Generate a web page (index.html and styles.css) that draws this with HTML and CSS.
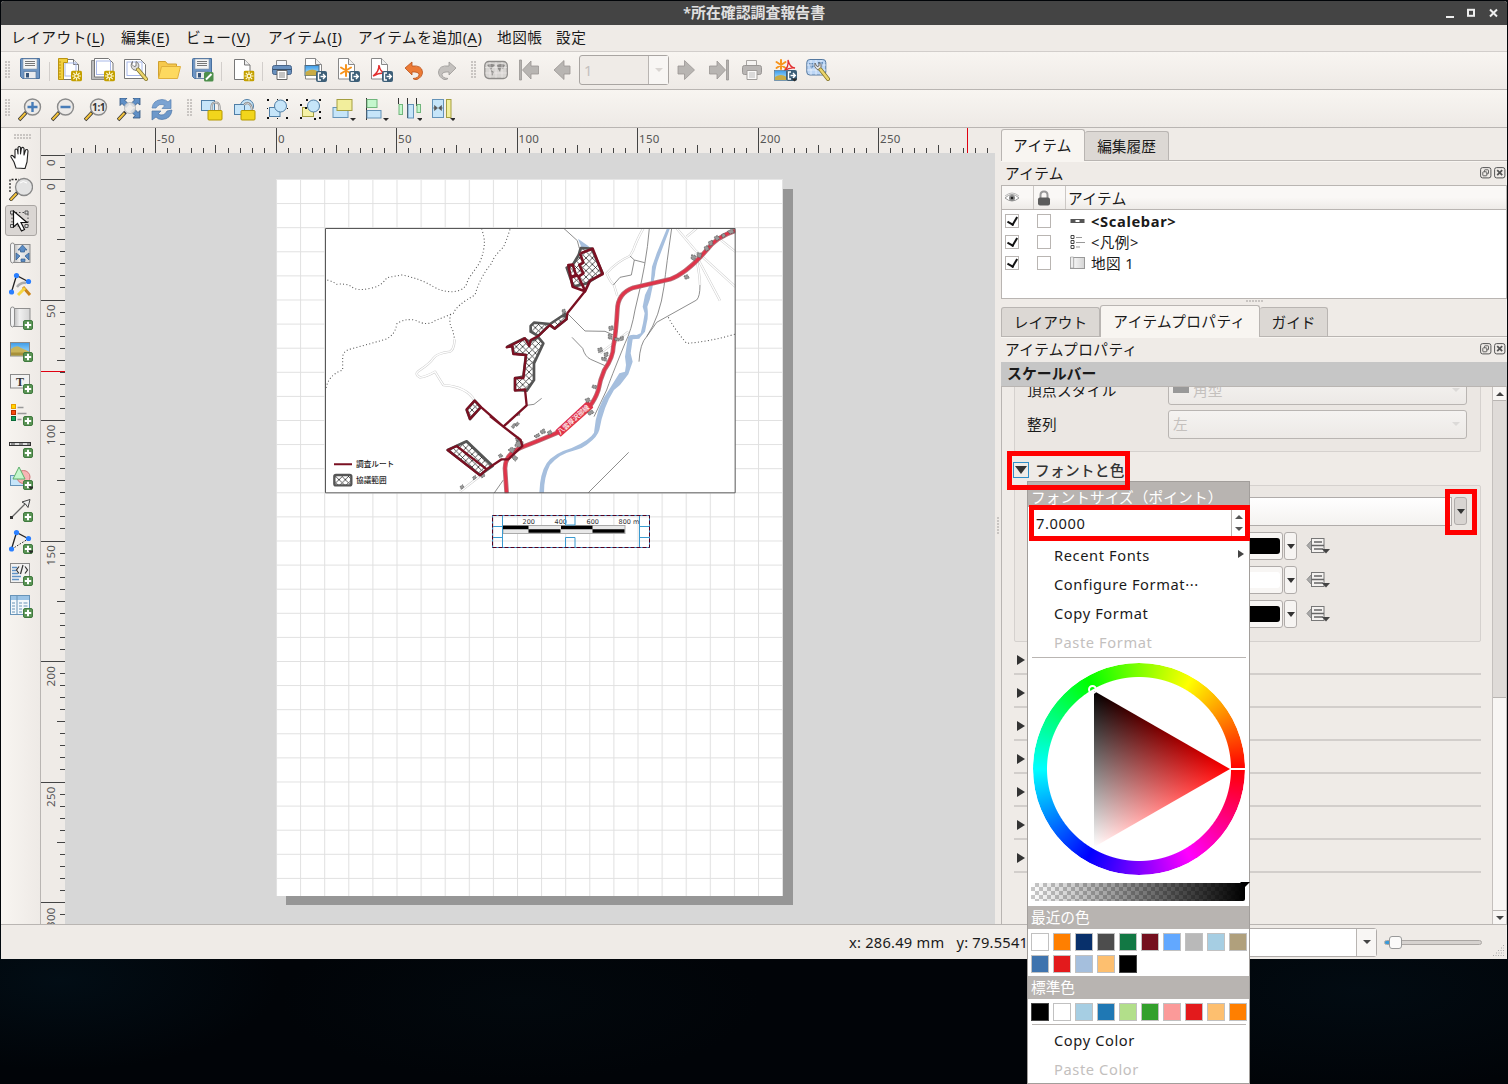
FILE: index.html
```html
<!DOCTYPE html>
<html lang="ja">
<head>
<meta charset="utf-8">
<title>所在確認調査報告書</title>
<link rel="stylesheet" href="styles.css">
</head>
<body>
<svg class="defs" width="0" height="0" aria-hidden="true">
  <defs>
    <linearGradient id="g-sky" x1="0" y1="0" x2="0" y2="1"><stop offset="0" stop-color="#3d9be8"/><stop offset=".5" stop-color="#7cc4f5"/></linearGradient>
    <linearGradient id="g-roll"><stop offset="0" stop-color="#bbb"/><stop offset=".35" stop-color="#f0f0f0"/><stop offset="1" stop-color="#d4d4d4"/></linearGradient>

    <symbol id="b-star" viewBox="0 0 11 11"><rect width="11" height="11" rx="2" fill="#c4a000"/><path d="M5.5 1v9M1 5.5h9M2.3 2.3l6.4 6.4M8.7 2.3L2.3 8.7" stroke="#fff8d0" stroke-width="1.2"/><circle cx="5.5" cy="5.5" r="1.8" fill="#c4a000" stroke="#fff8d0"/></symbol>
    <symbol id="b-plus" viewBox="0 0 10 10"><rect x=".5" y=".5" width="9" height="9" rx="1.5" fill="#5a9455" stroke="#3f7a3e"/><path d="M5 1.8v6.4M1.8 5h6.4" stroke="#fff" stroke-width="2"/></symbol>
    <symbol id="b-export" viewBox="0 0 11 11"><rect width="11" height="11" rx="2" fill="#3d5f78"/><path d="M5 2H2.5v7H5M4.5 5.5H9M7 3l2.3 2.5L7 8" fill="none" stroke="#fff" stroke-width="1.4"/></symbol>
    <symbol id="b-drop" viewBox="0 0 6 4"><path d="M0 .5h6L3 3.5z" fill="#2b2b2b"/></symbol>

    <symbol id="i-save" viewBox="0 0 24 24"><path d="M2.5 1.5q0-1 1-1h18v20h-17l-2-2z" fill="#6d95c4" stroke="#48709f"/><rect x="5" y="1" width="14" height="10" fill="#f4f4f4" stroke="#8a9aac" stroke-width=".6"/><path d="M7 3.5h10M7 5.5h10M7 7.5h10" stroke="#777"/><rect x="6" y="13.5" width="12" height="7" fill="#e9ebee" stroke="#597a9f" stroke-width=".7"/><rect x="8" y="15" width="3" height="4.500" fill="#35557c"/></symbol>
    <symbol id="i-page" viewBox="0 0 24 24"><path d="M4.500 1.500h11l5 5v15h-16z" fill="#fff" stroke="#777"/><path d="M15.500 1.500v5h5" fill="#eee" stroke="#777"/></symbol>
    <symbol id="i-newlayout" viewBox="0 0 24 24"><use href="#i-page"/><rect x="7" y="5" width="11" height="13" fill="none" stroke="#a9b9ea"/><path d="M.5.500h9v4h-4v17h-5z" fill="#f1cf3f" stroke="#bb9410"/><path d="M1 4h2M1 7h2M1 10h2M1 13h2M1 16h2M1 19h2" stroke="#bb9410"/><use href="#b-star" x="13" y="12.500" width="11" height="11"/></symbol>
    <symbol id="i-duplayout" viewBox="0 0 24 24"><path d="M.5 2.500h4v16h12v3h-16z" fill="#bbb" stroke="#888"/><path d="M3.500.500h14l4.500 4.500v14h-18.500z" fill="#fff" stroke="#777"/><rect x="5.500" y="3" width="14" height="13.500" fill="none" stroke="#a9b9ea"/><use href="#b-star" x="13" y="12.500" width="11" height="11"/></symbol>
    <symbol id="i-settings" viewBox="0 0 24 24"><path d="M.5 1.500h16l5 5v14h-21z" fill="#fff" stroke="#777"/><rect x="3" y="4" width="15" height="13.500" fill="none" stroke="#a9b9ea"/><path d="M8.500 3.500Q5.500 8 9 11.500l3 1 2.500-2.500q1.500-4.500-2.500-6.500v4.500l-2 .5-2-2z" fill="#ddd" stroke="#666" stroke-width=".8"/><path d="M14 11.500l8 9.500" stroke="#80742c" stroke-width="4" stroke-linecap="round"/><path d="M14 11.500l8 9.500" stroke="#ecd56c" stroke-width="2.500" stroke-linecap="round"/></symbol>
    <symbol id="i-folder" viewBox="0 0 24 24"><path d="M1.500 20V3.500h7l2 2.500h9v3" fill="#f6c94c" stroke="#cfa030"/><path d="M1.500 20.500L4.500 8.500h19l-3 12z" fill="#fdd95f" stroke="#e0b03c"/></symbol>
    <symbol id="i-saveas" viewBox="0 0 24 24"><use href="#i-save"/><rect x="14" y="14" width="9.500" height="9.500" rx="1.500" fill="#4d8f4c"/><path d="M16 21.500l5.500-5.500" stroke="#fff" stroke-width="2"/></symbol>
    <symbol id="i-newpage" viewBox="0 0 24 24"><path d="M3.500 1.500h10l5.500 5.500v14.500h-15.500z" fill="#fff" stroke="#777"/><path d="M13.500 1.500v5.500h5.500" fill="#eee" stroke="#777"/><use href="#b-star" x="12.500" y="12.500" width="11" height="11"/></symbol>
    <symbol id="i-print" viewBox="0 0 24 24"><path d="M6.500 8V2.500h10V8" fill="#f4f6fa" stroke="#888"/><rect x="2.500" y="7.500" width="19" height="9" rx="2" fill="#6991bf" stroke="#48658a"/><path d="M3 11.500h18" stroke="#35506f"/><path d="M7 12.500h10v9H7z" fill="#fff" stroke="#666"/><path d="M9 15h6M9 17h6M9 19h6" stroke="#888"/></symbol>
    <symbol id="i-printgrey" viewBox="0 0 24 24"><path d="M6.500 8V2.500h10V8" fill="#f6f4f2" stroke="#a8a5a2"/><rect x="2.500" y="7.500" width="19" height="9" rx="2" fill="#b9b6b4" stroke="#9a9795"/><path d="M7 12.500h10v9H7z" fill="#faf9f8" stroke="#a09d9a"/><path d="M9 15h6M9 17h6M9 19h6" stroke="#bbb"/></symbol>
    <symbol id="i-eximg" viewBox="0 0 24 24"><path d="M2.500.500h10l6 6v14.500h-16z" fill="#fff" stroke="#888"/><path d="M12.500.500v6h6" fill="#eee" stroke="#888"/><rect x="2" y="7.500" width="14" height="10" fill="url(#g-sky)" stroke="#4b6c86"/><path d="M2.500 14q7-5 13 0v3.500h-13z" fill="#c9ac45"/><use href="#b-export" x="13" y="13" width="11" height="11"/></symbol>
    <symbol id="i-exsvg" viewBox="0 0 24 24"><path d="M2.500.500h10l6 6v14.500h-16z" fill="#fff" stroke="#888"/><path d="M12.500.500v6h6" fill="#eee" stroke="#888"/><path d="M10 7v11M5 9.500l10 6M15 9.500l-10 6" stroke="#f7941d" stroke-width="2" stroke-linecap="round"/><use href="#b-export" x="13" y="13" width="11" height="11"/></symbol>
    <symbol id="i-expdf" viewBox="0 0 24 24"><path d="M2.500.500h10l6 6v14.500h-16z" fill="#fff" stroke="#888"/><path d="M12.500.500v6h6" fill="#eee" stroke="#888"/><path d="M4 18q6-4 6-11 1 7 6 8-6-.5-12 3" fill="none" stroke="#e33030" stroke-width="1.500"/><use href="#b-export" x="13" y="13" width="11" height="11"/></symbol>
    <symbol id="i-undo" viewBox="0 0 24 24"><path d="M3 10l7-6v4q10-1 10.500 6 0 5-5.500 7.500-3 .5-4-1 6-.5 6-4-.5-3-7-2.500V17z" fill="#ec7a35" stroke="#b9521a" stroke-width=".8"/></symbol>
    <symbol id="i-redo" viewBox="0 0 24 24"><path d="M21 10l-7-6v4q-10-1-10.500 6 0 5 5.500 7.500 3 .5 4-1-6-.5-6-4 .5-3 7-2.500V17z" fill="#c4c1be" stroke="#9b9895" stroke-width=".8"/></symbol>
    <symbol id="i-atlas" viewBox="0 0 24 24"><rect x=".8" y="3.500" width="22.500" height="17" rx="4" fill="#d7d5d2" stroke="#8d8b89" stroke-width="1.300"/><path d="M3 7q5-2 8 0l-3 3-1 2-3-4zM13 7q4-2 8 0l-2 4-2-1-1 4-2-3zM7 12l3 2-2 4z" fill="#8d8b89"/><path d="M6 4v16M12 4v16M18 4v16M1 9.500h22M1 15h22" stroke="#f4f2f0" stroke-width=".5"/></symbol>
    <symbol id="i-first" viewBox="0 0 24 24"><path d="M2.500 2v20h2v-20z" fill="#b4b1ae" stroke="#999693" stroke-width=".8"/><path d="M5.500 12l8.500-9v5h7.500v8H14v5z" fill="#b8b5b2" stroke="#999693" stroke-width=".8"/></symbol>
    <symbol id="i-prev" viewBox="0 0 24 24"><path d="M4 12l10-9.500V8h6v8h-6v5.500z" fill="#b8b5b2" stroke="#999693" stroke-width=".8"/></symbol>
    <symbol id="i-next" viewBox="0 0 24 24"><path d="M20.500 12l-10-9.500V8h-6.500v8h6.500v5.500z" fill="#b8b5b2" stroke="#999693" stroke-width=".8"/></symbol>
    <symbol id="i-last" viewBox="0 0 24 24"><path d="M19.500 2v20h2v-20z" fill="#b4b1ae" stroke="#999693" stroke-width=".8"/><path d="M18.500 12l-8.500-9v5H2.500v8H10v5z" fill="#b8b5b2" stroke="#999693" stroke-width=".8"/></symbol>
    <symbol id="i-exatlas" viewBox="0 0 24 24"><path d="M8 2v9M3.500 4l9 6M12.500 4l-9 6" stroke="#f7941d" stroke-width="2" stroke-linecap="round"/><path d="M11 13q5-4 4-11 2 8 7 8-5-1-11 3" fill="none" stroke="#e33030" stroke-width="1.300"/><rect x="1.500" y="12.500" width="12" height="10" fill="url(#g-sky)" stroke="#4b6c86" stroke-width=".6"/><path d="M2 19q6-4 11.500 0v3H2z" fill="#c9ac45"/><use href="#b-export" x="13" y="12" width="11" height="11"/><use href="#b-drop" x="18" y="20" width="7" height="4"/></symbol>
    <symbol id="i-atlasset" viewBox="0 0 24 24"><rect x=".8" y="1.500" width="19" height="15.500" rx="3" fill="#bcd6f5" stroke="#54789f"/><path d="M3 5h4l1 3-3 3zM12 4h5l-1 5-3-2z" fill="#5c86b5"/><path d="M5 2v15M10 2v15M15 2v15M1 7h19M1 12h19" stroke="#f0f7ff" stroke-width=".7"/><path d="M9 5Q7.500 9 11 11.500l2 .5 2-2q1-4-2-5.500v3.500l-2 .5z" fill="#e5e5e5" stroke="#555" stroke-width=".8"/><path d="M14.500 11.500L22 21" stroke="#80742c" stroke-width="4" stroke-linecap="round"/><path d="M14.500 11.500L22 21" stroke="#ecd56c" stroke-width="2.500" stroke-linecap="round"/></symbol>

    <symbol id="i-lens" viewBox="0 0 24 24"><path d="M1 22l7.500-8" stroke="#333" stroke-width="3.600"/><path d="M1.500 21.500l6-6.500" stroke="#f3c33d" stroke-width="2"/><circle cx="14.500" cy="9" r="8" fill="#eceae8" stroke="#8b8b8b" stroke-width="1.400"/></symbol>
    <symbol id="i-zoomin" viewBox="0 0 24 24"><use href="#i-lens"/><path d="M14.500 4v10M9.500 9h10" stroke="#477cb8" stroke-width="2.400"/></symbol>
    <symbol id="i-zoomout" viewBox="0 0 24 24"><use href="#i-lens"/><path d="M9.500 9h10" stroke="#477cb8" stroke-width="2.400"/></symbol>
    <symbol id="i-zoom11" viewBox="0 0 24 24"><use href="#i-lens"/><text x="14.600" y="12.600" font-size="10" font-weight="700" letter-spacing="-.4" text-anchor="middle" fill="#333">1:1</text></symbol>
    <symbol id="i-zoomfull" viewBox="0 0 24 24"><path d="M3 0h7L8 2.500l4 4-3 3-4-4-2 2zM23 0v7l-2.500-2-4 4-3-3 4-4L16 0zM23 20h-7l2-2.500-4-4 3-3 4 4 2-2z" fill="#5f8fc6" stroke="#30547d" stroke-width=".8"/><path d="M1 22l7.500-8" stroke="#333" stroke-width="3.600"/><path d="M1.500 21.500l6-6.500" stroke="#f3c33d" stroke-width="2"/><circle cx="13" cy="10" r="5.500" fill="#eceae8" fill-opacity=".85" stroke="#bbb"/></symbol>
    <symbol id="i-refresh" viewBox="0 0 24 24"><path d="M2 10q1-8 10-8.500 4 0 6 2.500l3-2.500v9h-9l3-3q-6-3-9 2.500z" fill="#7ba3d2" stroke="#5580b3" stroke-width=".7"/><path d="M22 12q-1 9-10 9.500-4 0-6-2.500l-4 3v-9h9l-3 3q6 3 9-3z" fill="#6d98ca" stroke="#4c76a8" stroke-width=".7"/></symbol>
    <symbol id="i-lock" viewBox="0 0 24 24"><rect x="1.500" y="2.500" width="13" height="10" fill="#c6e5f9" stroke="#4f7ea6"/><path d="M11.500 13V9q0-4.500 4-4.500t4 4.500v4" fill="none" stroke="#8a8a8a" stroke-width="2.200"/><path d="M11.500 13V9q0-4.500 4-4.500t4 4.500v4" fill="none" stroke="#e5e5e5" stroke-width=".8"/><rect x="8" y="12.500" width="14" height="9.500" rx="1" fill="#f2d51c" stroke="#b59800"/></symbol>
    <symbol id="i-unlock" viewBox="0 0 24 24"><circle cx="14" cy="8" r="6.500" fill="#c6e5f9" stroke="#4f7ea6"/><rect x="1.500" y="6.500" width="10" height="10" fill="#c6e5f9" stroke="#4f7ea6"/><path d="M11 7q2-3 5-1.500 3 2 3 7" fill="none" stroke="#8a8a8a" stroke-width="2.200"/><path d="M11 7q2-3 5-1.500 3 2 3 7" fill="none" stroke="#e5e5e5" stroke-width=".8"/><rect x="8" y="12.500" width="14" height="9.500" rx="1" fill="#f2d51c" stroke="#b59800"/></symbol>
    <symbol id="i-group" viewBox="0 0 24 24"><rect x="3.500" y="9.500" width="10.500" height="9" fill="#c6e5f9" stroke="#4f7ea6"/><circle cx="14.500" cy="8" r="6" fill="#c6e5f9" stroke="#4f7ea6"/><path d="M1 1h2v2H1zM11 1h1v1h-1zM20 1h2v2h-2zM1 10h1v1H1zM21 10h1v1h-1zM1 19h2v2H1zM11 20h1v1h-1zM20 19h2v2h-2z" fill="#111"/></symbol>
    <symbol id="i-ungroup" viewBox="0 0 24 24"><rect x="3.500" y="9.500" width="11" height="9" fill="#f5f1a6" stroke="#a59f40"/><circle cx="14.500" cy="8" r="6" fill="#c6e5f9" stroke="#4f7ea6"/><path d="M1 6h2v2H1zM7 1h2v2H7zM20 1h2v2h-2zM6 9h2v2H6zM1 19h2v2H1zM15 20h2v2h-2zM20 13h2v2h-2zM20 19h2v2h-2z" fill="#111"/></symbol>
    <symbol id="i-raise" viewBox="0 0 24 24"><rect x="1" y="9.500" width="15" height="10" fill="#c6e5f9" stroke="#6593b8"/><rect x="5" y="1.500" width="15" height="11" fill="#f2ee9c" stroke="#a59f40"/><use href="#b-drop" x="18" y="19.500" width="6" height="4"/></symbol>
    <symbol id="i-align" viewBox="0 0 24 24"><path d="M1.500 0v22" stroke="#333"/><rect x="2" y="1.500" width="10" height="8" fill="#c4f7cd" stroke="#71b67c"/><rect x="2" y="12.500" width="14" height="7.500" fill="#c6e5f9" stroke="#6593b8"/><use href="#b-drop" x="18" y="19.500" width="6" height="4"/></symbol>
    <symbol id="i-distrib" viewBox="0 0 24 24"><path d="M.5 0v6M9.500 0v20M18.500 0v8" stroke="#333"/><rect x="1" y="6.500" width="3.500" height="10" fill="#c4f7cd" stroke="#71b67c"/><rect x="10" y="6.500" width="5.500" height="13.500" fill="#c6e5f9" stroke="#6593b8"/><rect x="19" y="6.500" width="3.500" height="8" fill="#c4f7cd" stroke="#71b67c"/><use href="#b-drop" x="19" y="19.500" width="6" height="4"/></symbol>
    <symbol id="i-resize" viewBox="0 0 24 24"><rect x="1.500" y="1.500" width="11" height="18" fill="#c6e5f9" stroke="#6593b8"/><rect x="15.500" y="1.500" width="4.500" height="18" fill="#f2ee9c" stroke="#a59f40"/><path d="M2 10h3M12 10H9M3.500 7.500L6.500 10l-3 2.500zM10.500 7.500L7.500 10l3 2.500z" fill="#555" stroke="#555" stroke-width=".6"/><use href="#b-drop" x="19" y="19.500" width="6" height="4"/></symbol>

    <symbol id="i-hand" viewBox="0 0 24 24"><path d="M7 23l-2-6-3-5q-.5-2 1.500-1.500L6 13V5q1-2 2.500 0l.5 4V2.500q1.200-2 2.500 0V9l1-6q1.500-1.500 2.500.5V10l1.500-5q2-1.500 2.500 1l-1 11-2 6.500z" fill="#fff" stroke="#222" stroke-width="1.100" stroke-linejoin="round"/></symbol>
    <symbol id="i-zoomrect" viewBox="0 0 24 24"><path d="M1 15V2.500h9" fill="none" stroke="#222" stroke-dasharray="2 1.500" stroke-width="1.300"/><path d="M1 23.500l7.500-8" stroke="#333" stroke-width="3.400"/><path d="M1.500 23l6-6.500" stroke="#f3c33d" stroke-width="1.900"/><circle cx="15" cy="10" r="8.500" fill="#e3e3e3" stroke="#888" stroke-width="1.300"/><path d="M11 6q3-3 7 0" stroke="#fff" fill="none"/></symbol>
    <symbol id="i-select" viewBox="0 0 24 24"><path d="M3 3.500h16v13.500H3z" fill="none" stroke="#444" stroke-dasharray="1.500 2"/><path d="M1.500 2h3v3h-3zM16 2h3v3h-3zM1.500 15.500h3v3h-3zM16 15.500h3v3h-3z" fill="#ddd" stroke="#555"/><path d="M4.500 2v16l4-3.500 4 7.500 3-1.500-3.500-7h6z" fill="#fff" stroke="#111" stroke-width="1.200"/></symbol>
    <symbol id="i-roll" viewBox="0 0 24 24"><rect x="5" y="3.500" width="16" height="18" fill="url(#g-roll)" stroke="#8f8f8f"/><path d="M1.500 4q0-2 2-2t2 2v15q0 3-2 3t-2-3z" fill="#f3f3f3" stroke="#8f8f8f"/></symbol>
    <symbol id="i-movecontent" viewBox="0 0 24 24"><use href="#i-roll"/><path d="M13.500 4l4.500 5h-2.500v2h-4V9H9zM7 12l4 3-4 4zM20 12l-4 3 4 4zM12 18h4v2.500h-4z" fill="#5b8cc5" stroke="#315c8d" stroke-width=".7"/></symbol>
    <symbol id="i-nodes" viewBox="0 0 24 24"><path d="M2.500 19L7.500 2.500 19 8.500" fill="none" stroke="#222" stroke-width="1.300"/><path d="M14 14l7 8" stroke="#c98218" stroke-width="3"/><path d="M9 22l7-7" stroke="#f4d542" stroke-width="3"/><path d="M8 14q4-5 9-4" stroke="#aaa" stroke-width="2.500" fill="none"/><circle cx="2.500" cy="19" r="2.600" fill="#2a7fff"/><circle cx="7.500" cy="2.600" r="2.600" fill="#2a7fff"/><circle cx="19.500" cy="8.500" r="2.600" fill="#2a7fff"/></symbol>
    <symbol id="i-addmap" viewBox="0 0 24 24"><use href="#i-roll" y="-1"/><use href="#b-plus" x="14" y="14" width="10" height="10"/></symbol>
    <symbol id="i-addpic" viewBox="0 0 24 24"><rect x="1.500" y="4.500" width="19" height="13.500" fill="url(#g-sky)" stroke="#8a8a8a"/><path d="M2 11q6-5 10-1l8 3.500v4H2z" fill="#c9b45a"/><path d="M2 14.500h18v3H2z" fill="#a8913a"/><use href="#b-plus" x="14" y="14" width="10" height="10"/></symbol>
    <symbol id="i-addtext" viewBox="0 0 24 24"><rect x="1.500" y="4.500" width="19" height="13.500" fill="#f2f2f2" stroke="#8a8a8a"/><text x="11" y="15.500" font-size="12" text-anchor="middle" fill="#333" class="serif">T</text><use href="#b-plus" x="14" y="14" width="10" height="10"/></symbol>
    <symbol id="i-addlegend" viewBox="0 0 24 24"><rect x="2.500" y="2.500" width="4" height="4" fill="#ffd500" stroke="#e89b00"/><rect x="2.500" y="8.500" width="4" height="4" fill="#f84a10" stroke="#b62f00"/><rect x="2.500" y="14.500" width="4" height="4" fill="#12a35a" stroke="#0a6a38"/><path d="M8.500 5.500h6M8.500 11.500h9M8.500 17.500h4" stroke="#999" stroke-width="1.600"/><use href="#b-plus" x="14" y="14" width="10" height="10"/></symbol>
    <symbol id="i-addscale" viewBox="0 0 24 24"><rect x=".5" y="8.500" width="21" height="3" fill="#ddd" stroke="#333"/><path d="M2 10h4M10 10h4M18 10h3" stroke="#777" stroke-width="1.600"/><use href="#b-plus" x="14" y="14" width="10" height="10"/></symbol>
    <symbol id="i-addshape" viewBox="0 0 24 24"><rect x="1.500" y="9.500" width="14" height="10" fill="#c6e5f9" stroke="#6593b8"/><circle cx="14.500" cy="11" r="6.500" fill="#f7b5b5" stroke="#d27878"/><path d="M10 1l6 12H4z" fill="#c4f7cd" stroke="#5eaf6b"/><use href="#b-plus" x="14" y="14" width="10" height="10"/><use href="#b-drop" x="19" y="20" width="6" height="4"/></symbol>
    <symbol id="i-addarrow" viewBox="0 0 24 24"><path d="M2.500 19.500L17 5" stroke="#666" stroke-width="1.300"/><rect x="1" y="18" width="3" height="3" fill="#333"/><path d="M21 1.500l-2 8-2.500-3.500L13 4z" fill="#eee" stroke="#444"/><use href="#b-plus" x="14" y="14" width="10" height="10"/></symbol>
    <symbol id="i-addnode" viewBox="0 0 24 24"><path d="M2.500 19L7.500 2.500 19 8.500" fill="none" stroke="#222" stroke-width="1.300"/><path d="M3 19L19 9" stroke="#222" stroke-dasharray="1.500 1.500"/><circle cx="2.500" cy="19" r="2.600" fill="#2a7fff"/><circle cx="7.500" cy="2.600" r="2.600" fill="#2a7fff"/><circle cx="19.500" cy="8.500" r="2.600" fill="#2a7fff"/><use href="#b-plus" x="14" y="14" width="10" height="10"/><use href="#b-drop" x="19" y="20" width="6" height="4"/></symbol>
    <symbol id="i-addhtml" viewBox="0 0 24 24"><rect x="1.500" y="1.500" width="19" height="19" fill="#f2f2f2" stroke="#8a8a8a"/><path d="M3 5.500h5M3 8.500h4M3 11.500h6M3 14.500h9M3 17.500h7" stroke="#5f92c6" stroke-width="1.500"/><path d="M10 4.500L7.500 8l2.500 3.500M16 4.500L18.500 8 16 11.500M14 3l-2.500 9" fill="none" stroke="#333" stroke-width="1.200"/><use href="#b-plus" x="14" y="14" width="10" height="10"/></symbol>
    <symbol id="i-addtable" viewBox="0 0 24 24"><rect x="1.500" y="1.500" width="19" height="19" fill="#f4f8fb" stroke="#6894b8"/><rect x="2" y="2" width="18" height="4" fill="#9cc4e6"/><path d="M8 2v18" stroke="#6894b8"/><path d="M3 9h3M3 12h3M3 15h3M3 18h3M10 9h3M14.500 9h4M10 12h3M14.500 12h4M10 15h3M10 18h3" stroke="#6894b8" stroke-width="1.200"/><use href="#b-plus" x="14" y="14" width="10" height="10"/></symbol>

    <symbol id="i-float" viewBox="0 0 12 12"><rect x=".6" y=".6" width="10.300" height="10.300" rx="2" fill="none" stroke="#555"/><rect x="4.500" y="2.800" width="4" height="4" rx=".6" fill="none" stroke="#555" stroke-width=".9"/><rect x="2.800" y="4.800" width="4" height="4" rx=".6" fill="#efebe7" stroke="#555" stroke-width=".9"/></symbol>
    <symbol id="i-close" viewBox="0 0 12 12"><rect x=".6" y=".6" width="10.300" height="10.300" rx="2" fill="none" stroke="#555"/><path d="M3.200 3.200l5 5M8.200 3.200l-5 5" stroke="#555" stroke-width="1.800"/></symbol>
    <symbol id="i-defined" viewBox="0 0 25 18"><path d="M1 8.500L5.500 3.500v10z" fill="#aaa" stroke="#888"/><rect x="5.500" y="1.500" width="12.500" height="14" fill="#f4f2f0" stroke="#777"/><path d="M8 5h8M5.500 8.500h12.500M8 12h9" stroke="#666" stroke-width="1.300"/><path d="M16 12h8l-4 4.500z" fill="#444"/></symbol>
  </defs>
</svg>

<div class="window">
  <header class="titlebar"><span class="title">*所在確認調査報告書</span><svg class="winctl" viewBox="0 0 56 14" width="56" height="14"><path d="M1 11h8" stroke="#eee" stroke-width="2.200"/><rect x="23" y="3.800" width="6" height="6" fill="none" stroke="#eee" stroke-width="2"/><path d="M45 3.500l7 7M52 3.500l-7 7" stroke="#eee" stroke-width="2"/></svg></header>

  <nav class="menubar"><span>レイアウト(<u>L</u>)</span><span>編集(<u>E</u>)</span><span>ビュー(<u>V</u>)</span><span>アイテム(<u>I</u>)</span><span>アイテムを追加(<u>A</u>)</span><span>地図帳</span><span>設定</span></nav>

  <div class="toolbar first">
    <i class="handle"></i>
    <b><svg><use href="#i-save"/></svg></b><i class="sep s7"></i>
    <b><svg><use href="#i-newlayout"/></svg></b><b><svg><use href="#i-duplayout"/></svg></b><b><svg><use href="#i-settings"/></svg></b><b><svg><use href="#i-folder"/></svg></b><b><svg><use href="#i-saveas"/></svg></b><i class="sep s8"></i>
    <b><svg><use href="#i-newpage"/></svg></b><i class="sep s6"></i>
    <b><svg><use href="#i-print"/></svg></b><b><svg><use href="#i-eximg"/></svg></b><b><svg><use href="#i-exsvg"/></svg></b><b><svg><use href="#i-expdf"/></svg></b><b><svg><use href="#i-undo"/></svg></b><b><svg><use href="#i-redo"/></svg></b>
    <i class="handle mid"></i>
    <b><svg><use href="#i-atlas"/></svg></b><b><svg><use href="#i-first"/></svg></b><b><svg><use href="#i-prev"/></svg></b>
    <span class="pagebox"><span>1</span><em></em></span>
    <b><svg><use href="#i-next"/></svg></b><b><svg><use href="#i-last"/></svg></b><b><svg><use href="#i-printgrey"/></svg></b><b><svg><use href="#i-exatlas"/></svg></b><b><svg><use href="#i-atlasset"/></svg></b>
  </div>
  <div class="toolbar second">
    <i class="handle"></i>
    <b><svg><use href="#i-zoomin"/></svg></b><b><svg><use href="#i-zoomout"/></svg></b><b><svg><use href="#i-zoom11"/></svg></b><b><svg><use href="#i-zoomfull"/></svg></b><b><svg><use href="#i-refresh"/></svg></b>
    <i class="handle mid"></i>
    <b><svg><use href="#i-lock"/></svg></b><b><svg><use href="#i-unlock"/></svg></b><b><svg><use href="#i-group"/></svg></b><b><svg><use href="#i-ungroup"/></svg></b><b><svg><use href="#i-raise"/></svg></b><b><svg><use href="#i-align"/></svg></b><b><svg><use href="#i-distrib"/></svg></b><b><svg><use href="#i-resize"/></svg></b>
  </div>

  <main class="work">
    <aside class="toolbox">
      <i class="handle"></i>
      <b><svg><use href="#i-hand"/></svg></b><b><svg><use href="#i-zoomrect"/></svg></b><b class="on"><svg><use href="#i-select"/></svg></b><b><svg><use href="#i-movecontent"/></svg></b><b><svg><use href="#i-nodes"/></svg></b><b><svg><use href="#i-addmap"/></svg></b><b><svg><use href="#i-addpic"/></svg></b><b><svg><use href="#i-addtext"/></svg></b><b><svg><use href="#i-addlegend"/></svg></b><b><svg><use href="#i-addscale"/></svg></b><b><svg><use href="#i-addshape"/></svg></b><b><svg><use href="#i-addarrow"/></svg></b><b><svg><use href="#i-addnode"/></svg></b><b><svg><use href="#i-addhtml"/></svg></b><b><svg><use href="#i-addtable"/></svg></b>
    </aside>

    <svg class="canvas" width="954" height="796" viewBox="41 128 954 796">
      <defs>
        <pattern id="grid" width="24.1" height="24.1" x="276" y="179" patternUnits="userSpaceOnUse"><path d="M0 .5h24.1M.5 0v24.1" stroke="#e0e0e0" fill="none"/></pattern>
        <pattern id="hatch" width="19" height="19" patternUnits="userSpaceOnUse"><path d="M0 0l19 19M19 0L0 19" stroke="#222" stroke-width="2.300"/></pattern>
        <clipPath id="mapclip"><rect x="16" y="25" width="1230" height="795"/></clipPath>
      </defs>
      <rect x="41" y="128" width="954" height="796" fill="#efebe7"/>
      <g fill="none" stroke="#444" shape-rendering="crispEdges">
        <path d="M70.850 150.500H995" stroke-width="5" stroke-dasharray="1 11.050"/>
        <path d="M94.950 149H995" stroke-width="8" stroke-dasharray="1 59.250"/>
        <path d="M155.200 140.500H995" stroke-width="25" stroke-dasharray="1 119.500"/>
        <path d="M62.500 166.950V924" stroke-width="5" stroke-dasharray="1 11.050"/>
        <path d="M61 179V924" stroke-width="8" stroke-dasharray="1 59.250"/>
        <path d="M53 179V924" stroke-width="24" stroke-dasharray="1 119.500"/>
      </g>
      <path d="M41 155.500h24" stroke="#444"/>
      <rect x="65" y="153" width="930" height="771" fill="#d7d7d7"/>
      <path d="M967.500 128v25M41 371.500h24" stroke="#e00010"/>
      <g class="rulertext">
        <text x="157" y="143">-50</text><text x="278" y="143">0</text><text x="398" y="143">50</text><text x="518.500" y="143">100</text><text x="639" y="143">150</text><text x="760" y="143">200</text><text x="880" y="143">250</text>
        <text transform="translate(55 166) rotate(-90)">0</text><text transform="translate(55 190) rotate(-90)">0</text><text transform="translate(55 318) rotate(-90)">50</text><text transform="translate(55 445) rotate(-90)">100</text><text transform="translate(55 565.500) rotate(-90)">150</text><text transform="translate(55 686.500) rotate(-90)">200</text><text transform="translate(55 807) rotate(-90)">250</text><text transform="translate(55 928) rotate(-90)">300</text>
      </g>
      <rect x="286" y="189" width="507" height="716" fill="#969696"/>
      <rect x="276" y="179.500" width="507" height="716.500" fill="#fff"/>
      <rect x="276" y="179.500" width="507" height="716.500" fill="url(#grid)"/>

      <g transform="translate(320 220) scale(.33333)" fill="none" stroke-linejoin="round">
        <rect x="16" y="25" width="1230" height="795" fill="#fff"/>
        <g clip-path="url(#mapclip)">
          <g stroke="#555" stroke-width="3.200" stroke-dasharray="3 7">
            <path d="M22 180Q40 185 50 193Q75 190 92 198Q110 215 150 205Q185 200 200 173L245 165Q300 175 340 200Q380 222 415 212Q440 205 443 180L478 130Q495 90 493 60Q490 40 485 28"/>
            <path d="M570 28Q560 60 550 82Q520 110 515 130Q480 170 465 225Q410 255 400 280L345 302Q320 320 285 300Q250 295 230 312Q225 350 190 360L100 385Q70 390 68 410V450Q25 465 18 505"/>
            <path d="M392 282Q385 310 398 330L404 358"/><path d="M1045 292Q1065 330 1100 370Q1170 365 1246 342"/>
          </g>
          <g stroke="#ccc" stroke-width="7">
            <path d="M404 358Q402 390 390 395Q350 400 340 415Q330 430 300 450Q280 462 300 472Q320 470 345 455Q360 480 370 495Q440 500 464 542"/>
            <path d="M970 25Q950 60 940 90L930 108Q890 125 860 160Q870 185 882 195L892 228M1070 25L1125 90L1246 200M1125 100L1200 242M1100 50L1130 25M1130 120Q1140 170 1140 195M1190 50L1246 95M420 815L480 768M840 400L880 370L925 335"/>
          </g>
          <g stroke="#fff" stroke-width="4">
            <path d="M404 358Q402 390 390 395Q350 400 340 415Q330 430 300 450Q280 462 300 472Q320 470 345 455Q360 480 370 495Q440 500 464 542"/>
            <path d="M970 25Q950 60 940 90L930 108Q890 125 860 160Q870 185 882 195L892 228M1070 25L1125 90L1246 200M1125 100L1200 242M1100 50L1130 25M1130 120Q1140 170 1140 195M1190 50L1246 95M420 815L480 768M840 400L880 370L925 335"/>
          </g>
          <g stroke="#777" stroke-width="2.500">
            <path d="M728 22L772 62L778 85M742 280L795 333L855 334L880 345M756 352L788 385Q795 410 812 418L855 437M988 25Q980 130 945 270Q935 330 915 370Q870 480 860 510L822 590M1055 25Q1040 130 1032 200Q1020 290 980 350Q960 370 957 425M1140 195Q1140 230 1130 240L1010 307L980 350M930 108L943 120L974 128M943 120L934 165L900 172L880 195M926 697L805 818M550 780L522 820M620 556L642 553L665 535"/>
          </g>
          <path d="M1041 25h9L1018 110Q1006 140 1005 165L990 237L982 260Q986 290 980 310L975 335Q960 352 958 356L938 358L932 400L938 425L925 463L900 495L882 510Q850 560 838 630Q832 650 808 668Q790 685 760 692Q720 700 690 735Q672 770 672 818H658Q660 760 680 730Q700 700 755 684Q810 660 822 638Q828 560 868 508L898 460L915 455L918 435L915 410L924 350Q930 342 950 345L962 340Q970 310 974 280L968 260L975 225L992 190L996 140L1010 100z" fill="#a6bfde"/>
          <path d="M774 56l34 24-22 6z" fill="#a6bfde"/>
          <path d="M1246 32Q1190 50 1160 90Q1100 160 1050 178L940 203Q893 220 892 270Q888 340 880 380Q880 410 853 450Q840 480 835 510Q825 540 808 560L720 635Q650 665 610 680Q555 700 555 745L560 820" stroke="#b5727a" stroke-width="14"/>
          <path d="M1246 32Q1190 50 1160 90Q1100 160 1050 178L940 203Q893 220 892 270Q888 340 880 380Q880 410 853 450Q840 480 835 510Q825 540 808 560L720 635Q650 665 610 680Q555 700 555 745L560 820" stroke="#e0344a" stroke-width="9"/>
          <path d="M709 632L803 545L817 562L722 647z" fill="#e0344a" stroke="#e0344a" stroke-width="5"/>
          <g fill="#999" stroke="#555" stroke-width="2" stroke-dasharray="5 2">
            <path d="M866 320l12-3 2 12-12 3zM865 342l10 2v14l-10-2zM884 353l14 2v8l-14-2zM900 352l10-4v12l-8 2zM833 386l12-4 3 12-12 4zM852 400l12-4v12l-10 6zM845 412l14 2v10l-14-4zM818 495l12 2-2 10-12-4zM795 538l12-5 4 10-10 5zM802 578l14-8 6 8-14 8zM1115 104l14 4-6 14-10-6zM1132 98l14 2-4 14-10-4zM1152 82l10-6 6 12-10 6zM1165 66l12-6 2 14-10 4zM1182 52l10-6 8 10-10 6zM1204 44l8-4 6 8-10 6zM1222 34l16-8 4 12-12 4zM1092 168l10-4 6 10-12 4zM726 270l8-3 4 10-10 4zM574 620l8-10 6 4-8 12zM586 612l6-6 6 5-8 9zM586 655l10-4 4 12-10 2zM642 648l14-8 4 8-12 6zM660 634l12-8 5 12-12 4zM682 636l10-6 4 10-10 6zM564 690l10-8 12 4-8 14zM576 714l8-8 10 8-8 10zM535 706l8-5 6 8-10 4zM458 772l8-6 3 8-8 6zM482 764l8-6 5 10-10 6zM420 800l8-6 4 8-8 6zM592 580l6-3 2 8-8 2zM592 660l18 6-4 18-22-6z"/>
          </g>
          <g fill="url(#hatch)" stroke="#555" stroke-width="8">
            <path d="M782 84L815 86L848 160L800 190L760 200L740 143L758 135L776 105z"/><path d="M632 318L642 308L690 312L735 282L740 297L704 326L688 315L655 348L632 335z"/>
            <path d="M562 380L612 355L628 365L655 352L670 370L642 430V480L620 512L585 510V475L610 470L618 405L580 400L577 378z"/><path d="M464 542L482 562L450 597L440 570z"/><path d="M383 690L440 664L518 738L480 765z"/>
          </g>
          <g stroke="#7a1022" stroke-width="8">
            <path d="M782 100L818 86L848 162L810 182L795 214L758 200L745 135L758 134L768 165L752 172M780 100L790 128L778 135L790 160L775 170L780 180L795 212M750 173L775 166"/>
            <path d="M795 214L742 280L740 297L704 326L690 315L655 348L632 360L628 378L615 355L560 382L577 378L580 402L618 405L610 474H585V512L615 508L620 556L550 620L484 562L464 542L440 568L450 597L482 562M510 588L550 620L602 660L607 678L565 718H545L500 748L480 766L383 690L410 678L500 748" stroke-width="7"/>
          </g>
          <path d="M42 733H96" stroke="#7a1022" stroke-width="6"/>
          <rect x="43" y="765" width="51" height="31" rx="5" fill="url(#hatch)" stroke="#555" stroke-width="7"/>
          <g class="maptext" fill="#222"><text x="108" y="741">調査ルート</text><text x="108" y="790">協議範囲</text></g>
          <text class="maptext" fill="#fff" transform="translate(721 644) rotate(-42)">八雲厚沢部線</text>
        </g>
        <rect x="16.500" y="25.500" width="1229" height="793" stroke="#555" stroke-width="3"/>
      </g>

      <g class="scaletext"><text x="522.500" y="523.500">200</text><text x="554.500" y="523.500">400</text><text x="586.500" y="523.500">600</text><text x="618.500" y="523.500">800 m</text></g>
      <rect x="503" y="525.500" width="122" height="8" fill="#e8e8e8" stroke="#aaa"/>
      <path d="M503 527.500h25.500M561 527.500h31.500M528.500 531h32M592.500 531h32" stroke="#000" stroke-width="3.500"/>
      <g fill="none" stroke="#3a9ad0"><path d="M502.500 515v33M492.500 526.500h10M492.500 537.500h10M639.500 515v33M639.500 526.500h10M639.500 537.500h10M565.500 515v10h9.500v-10M565.500 547.500v-10h9.500v10"/></g>
      <rect x="492.500" y="515.500" width="157" height="32" fill="none" stroke="#3a9ad0"/>
      <rect x="492.500" y="515.500" width="157" height="32" fill="none" stroke="#550022" stroke-dasharray="4 2"/>
    </svg>

    <div class="splitter"><i></i></div>

    <section class="side">
      <div class="tabs t1"><span class="on w84">アイテム</span><span class="w84">編集履歴</span></div>
      <div class="docktitle"><span>アイテム</span><svg><use href="#i-float"/></svg><svg><use href="#i-close"/></svg></div>
      <div class="tree">
        <div class="thead">
          <span class="c1"><svg width="16" height="12" viewBox="0 0 16 12"><path d="M1 6q7-7 14 0-7 6-14 0z" fill="#fff" stroke="#999"/><circle cx="8" cy="6" r="3" fill="#888"/><circle cx="8" cy="6" r="1.300" fill="#222"/><path d="M1 4q7-6 14 0" fill="none" stroke="#bbb"/></svg></span>
          <span class="c2"><svg width="14" height="16" viewBox="0 0 14 16"><path d="M3.500 8V5q0-3.500 3.500-3.500T10.500 5v3" fill="none" stroke="#999" stroke-width="2"/><rect x="1" y="7.500" width="12" height="8" rx="2" fill="#5c5c5c"/></svg></span>
          <span class="c3">アイテム</span>
        </div>
        <div class="trow"><i class="chk on"></i><i class="chk"></i><svg viewBox="0 0 15 14"><rect x=".5" y="5" width="14" height="4" fill="#555"/><rect x="5.500" y="6" width="4" height="2" fill="#fff"/></svg><strong>&lt;Scalebar&gt;</strong></div>
        <div class="trow"><i class="chk on"></i><i class="chk"></i><svg viewBox="0 0 15 14"><path d="M1 .5h3v3H1zM1 5.500h3v3H1zM1 10.500h3v3H1z" fill="none" stroke="#444"/><path d="M6 2.500h6M6 7.500h9M6 12h4" stroke="#999"/></svg><span>&lt;凡例&gt;</span></div>
        <div class="trow"><i class="chk on"></i><i class="chk"></i><svg viewBox="0 0 15 14"><rect x=".5" y="1.500" width="14" height="11" fill="url(#g-roll)" stroke="#999"/><path d="M.5 1h3v11h-3z" fill="#eee" stroke="#999" stroke-width=".6"/></svg><span>地図 1</span></div>
      </div>
      <div class="hsplit"><i></i></div>
      <div class="tabs t2"><span class="w100">レイアウト</span><span class="on w160">アイテムプロパティ</span><span class="w68">ガイド</span></div>
      <div class="docktitle"><span>アイテムプロパティ</span><svg><use href="#i-float"/></svg><svg><use href="#i-close"/></svg></div>
      <h2 class="caption">スケールバー</h2>
      <div class="scroll">
        <div class="form">
          <div class="group top">
            <div class="field"><label>頂点スタイル</label><span class="combo"><i class="thumb"></i>角型</span></div>
            <div class="field"><label>整列</label><span class="combo">左</span></div>
          </div>
          <h3 class="gtitle"><i class="expander"></i>フォントと色</h3>
          <div class="group fonts">
            <div class="fontrow"><span class="fontbtn"></span><span class="drop lit"></span></div>
            <div class="colorrow"><span class="colorbtn"><i class="black"></i></span><span class="drop"></span><svg><use href="#i-defined"/></svg></div>
            <div class="colorrow"><span class="colorbtn"><i class="white"></i></span><span class="drop"></span><svg><use href="#i-defined"/></svg></div>
            <div class="colorrow"><span class="colorbtn"><i class="black"></i></span><span class="drop"></span><svg><use href="#i-defined"/></svg></div>
          </div>
          <div class="folded"></div><div class="folded"></div><div class="folded"></div><div class="folded"></div><div class="folded"></div><div class="folded"></div><div class="folded"></div>
        </div>
        <div class="vbar"><i class="up"></i><i class="track"></i><i class="grip"></i><i class="down"></i></div>
      </div>
    </section>
  </main>

  <footer class="status"><span class="coords">x: 286.49 mm&nbsp;&nbsp; y: 79.5541</span><span class="zoombox"><em></em></span><span class="slider"><i></i></span><svg class="resizegrip" width="12" height="12"><path d="M10 1.500h1M8 4h3M5 6.500h6M3 9h8M0 11.500h11" stroke="#aaa" stroke-dasharray="1 1.500"/></svg></footer>
</div>

<div class="popup">
  <h4>フォントサイズ（ポイント）</h4>
  <div class="spin"><span>7.0000</span><em><i class="tu"></i><i class="td"></i></em></div>
  <div class="item more">Recent Fonts</div><div class="item">Configure Format<span class="dots">···</span></div><div class="item">Copy Format</div><div class="item off">Paste Format</div>
  <hr>
  <div class="wheel"><div class="tri"></div><i class="huemark"></i><i class="pick"></i></div>
  <div class="alpha"><i></i></div>
  <h4 class="recent">最近の色</h4>
  <div class="swatches two"><i class="c-white"></i><i class="c-orange"></i><i class="c-navy"></i><i class="c-grey"></i><i class="c-green"></i><i class="c-wine"></i><i class="c-sky"></i><i class="c-silver"></i><i class="c-pale"></i><i class="c-khaki"></i><i class="c-steel"></i><i class="c-red"></i><i class="c-lav"></i><i class="c-peach"></i><i class="c-black"></i></div>
  <h4>標準色</h4>
  <div class="swatches"><i class="c-black"></i><i class="c-white"></i><i class="c-pale"></i><i class="c-blue"></i><i class="c-mint"></i><i class="c-leaf"></i><i class="c-pink"></i><i class="c-red"></i><i class="c-peach"></i><i class="c-orange"></i></div>
  <hr class="low">
  <div class="item">Copy Color</div><div class="item off">Paste Color</div>
</div>

<div class="mark m1"></div><div class="mark m2"></div><div class="mark m3"></div>
</body>
</html>
```

FILE: styles.css
```css
* { box-sizing: border-box; }
html, body { margin: 0; height: 1084px; overflow: hidden; }
body {
  position: relative;
  width: 1508px;
  padding: 1px 1px 0;
  font: 14.67px/20px "Noto Sans", "Noto Sans CJK JP", sans-serif;
  color: #1a1a1a;
  background:
    radial-gradient(ellipse 220px 90px at 60px 980px, #020d15, transparent),
    radial-gradient(ellipse 300px 100px at 1360px 990px, #020b12, transparent),
    radial-gradient(ellipse 240px 80px at 520px 1000px, #02080d, transparent),
    #010408;
}
.defs { position: absolute; }
i, em { font-style: normal; display: block; }
svg { display: block; }
.serif { font-family: "Liberation Serif", serif; }

.window { height: 958px; background: #efebe7; border-radius: 3px 3px 0 0; overflow: hidden; display: flex; flex-direction: column; }
.titlebar { height: 24px; background: #444; color: #e0e0e0; font-size: 14.9px; font-weight: 600; line-height: 22px; display: grid; grid-template-columns: 56px 1fr 56px; align-items: start; }
.title { grid-column: 2; text-align: center; }
.winctl { grid-column: 3; margin: 5px 0 0 -6px; }
.menubar { height: 27px; padding: 1px 0 0 10px; line-height: 22px; display: grid; grid-template-columns: 110px 65px 82px 90px 139px 59px auto; border-bottom: 1px solid #d2cecb; letter-spacing: .5px; }
.menubar span { white-space: nowrap; }
.menubar u { text-underline-offset: 3px; text-decoration-thickness: 1px; }

.toolbar { display: flex; height: 38px; background: linear-gradient(#f8f5f1, #eeeae6); border-bottom: 1px solid #b9b5b2; }
.toolbar b, .toolbox b { width: 33px; flex: none; display: flex; justify-content: center; }
.toolbar b { padding-top: 6px; }
.toolbar.second b { padding-top: 8px; }
.toolbar b svg, .toolbox b svg { width: 24px; height: 24px; overflow: visible; }
.toolbar .handle { width: 12px; padding: 9px 0 0 4px; }
.toolbar .handle.mid { width: 16px; padding-left: 8px; }
.toolbar.second .handle.mid { width: 17px; padding-left: 9px; }
.toolbar .handle::before { content: ""; display: block; width: 6px; height: 18px; background: radial-gradient(circle at 1px 1px, #c9c5c2 .8px, transparent 1px) 0 0 / 3px 3px; }
.sep { padding: 10px 0 0 3px; }
.sep::before { content: ""; display: block; width: 1px; height: 19px; background: #d2cecb; }
.s6 { width: 6px; } .s7 { width: 7px; } .s8 { width: 8px; }
.pagebox { width: 90px; height: 30px; margin: 3px 0 0 1px; border: 1px solid #a9a5a2; border-radius: 3px; display: flex; color: #c4c0bd; line-height: 28px; background: #efebe7; }
.pagebox span { flex: 1; padding-left: 4px; }
.pagebox em, .zoombox em { width: 20px; border-left: 1px solid #b9b5b2; background: #f8f6f4; display: grid; place-items: center; }
.pagebox em::after, .zoombox em::after { content: ""; border: 4px solid transparent; border-top-color: #d9d5d2; border-bottom: 0; }

.work { display: flex; height: 797px; border-bottom: 1px solid #b9b5b2; }
.toolbox { width: 40px; background: linear-gradient(90deg, #f8f5f1, #eeeae6); border-right: 1px solid #b9b5b2; padding: 6px 0 0 4px; display: flex; flex-direction: column; }
.toolbox .handle { height: 6px; width: 17px; flex: none; margin: 0 0 1px 9px; background: radial-gradient(circle at 1px 1px, #c9c5c2 .8px, transparent 1px) 0 0 / 3px 3px; }
.toolbox b { width: 32px; height: 32.1px; align-items: center; border: 1px solid transparent; }
.toolbox b.on { background: #dad6d3; border-color: #aaa6a3; border-radius: 3px; height: 31px; margin-bottom: 1.1px; }
.canvas { flex: none; font-family: "Noto Sans", sans-serif; }
.rulertext { font-size: 11.5px; fill: #555; letter-spacing: .3px; }
.maptext { font-family: "Noto Sans CJK JP", sans-serif; font-size: 23px; font-weight: 500; }
text.maptext { font-size: 20px; }
.scaletext { font: 6.5px "DejaVu Sans", sans-serif; fill: #333; }
.splitter { width: 6px; padding: 389px 0 0 2px; }
.splitter i { width: 3px; height: 18px; background: radial-gradient(circle at 1px 1px, #c9c5c2 .8px, transparent 1px) 0 0 / 3px 3px; }

.side { width: 506px; display: flex; flex-direction: column; }
.tabs { display: flex; align-items: flex-end; height: 32px; border-bottom: 1px solid #b9b5b2; padding-top: 1px; flex: none; box-shadow: 0 1px #f8f5f1; }
.tabs span { height: 29px; line-height: 28px; text-align: center; background: #dcd8d4; border: 1px solid #b9b5b2; border-bottom: 0; border-radius: 3px 3px 0 0; border-left-width: 0; white-space: nowrap; }
.tabs span.on { height: 32px; margin-bottom: -1px; line-height: 30px; background: #f8f5f1; border-left-width: 1px; padding-right: 1px; letter-spacing: .4px; }
.t1 { height: 33px; }
.w84 { width: 84px; }
.tabs .w100 { width: 99px; border-left-width: 1px; }
.w160 { width: 160px; } .w68 { width: 68px; }
.docktitle { height: 24px; display: flex; align-items: center; gap: 2px; padding: 0 1px 0 4px; flex: none; letter-spacing: .45px; line-height: 19px; }
.docktitle span { flex: 1; }
.docktitle svg { width: 12px; height: 12px; }
.tree { height: 114px; border: 1px solid #b9b5b2; background: #fff; flex: none; }
.thead { height: 24px; display: flex; background: linear-gradient(#faf8f6 50%, #eeebe8); border-bottom: 1px solid #b9b5b2; letter-spacing: .4px; }
.thead span { display: flex; align-items: center; }
.thead .c1 { width: 32px; border-right: 1px solid #ccc8c5; padding-left: 2px; }
.thead .c2 { width: 32px; border-right: 1px solid #ccc8c5; padding-left: 3px; }
.thead .c3 { padding-left: 2px; }
.trow { height: 21px; display: flex; align-items: center; padding-left: 3px; }
.trow svg { width: 15px; height: 14px; margin: 0 6px 0 1px; }
.trow strong { letter-spacing: .65px; }
.trow span { letter-spacing: .4px; }
.chk { width: 14px; height: 14px; border: 1px solid #b9b5b2; background: #fff; margin-right: 18px; display: grid; place-items: center; }
.chk.on::after { content: ""; width: 5px; height: 8px; border: solid #111; border-width: 0 2px 2px 0; transform: translate(0, -1px) rotate(30deg); }
.hsplit { height: 6px; padding: 1px 0 0 245px; }
.hsplit i { width: 17px; height: 3px; background: radial-gradient(circle at 1px 1px, #c9c5c2 .8px, transparent 1px) 0 0 / 3px 3px; }
.caption { margin: 1px 0 0; height: 25px; background: #c6c6c6; border-bottom: 1px solid #b9b5b2; padding-left: 6px; font-size: 14.9px; line-height: 22px; flex: none; }
.scroll { flex: 1; min-height: 0; overflow: hidden; display: flex; border-left: 1px solid #b9b5b2; }
.form { width: 490px; padding-left: 12px; }
.group { width: 467px; border: 1px solid #d5d1ce; border-radius: 2px; background: #ebe7e3; }
.group.top { height: 79px; margin-top: -14px; border-top: 0; padding-left: 12px; }
.field { display: flex; height: 34px; align-items: center; }
.field label { width: 141px; letter-spacing: .3px; }
.combo { width: 299px; height: 29px; border: 1px solid #b9b5b2; border-radius: 3px; background: linear-gradient(#f5f3f1, #ece9e6); color: #c4c0bd; display: flex; align-items: center; gap: 4px; padding: 0 6px 0 4px; }
.combo::after { content: ""; margin-left: auto; border: 4px solid transparent; border-top-color: #dcdad8; border-bottom: 0; }
.thumb { width: 16px; height: 10px; background: #999; margin-top: -4px; }
.gtitle { margin: 0; height: 33px; padding-top: 3px; display: flex; align-items: center; gap: 6px; font-size: 14.67px; font-weight: 500; color: #333; letter-spacing: .3px; }
.expander { width: 16px; height: 16px; border: 1px solid #2f8fc9; display: grid; place-items: center; margin-left: -1px; }
.expander::after { content: ""; border: 6px solid transparent; border-top: 8px solid #333; border-bottom: 0; }
.group.fonts { height: 157px; padding: 11px 0 0 12px; }
.fontrow { display: flex; height: 29px; width: 450px; }
.fontbtn { width: 425px; border: 1px solid #b0acaa; background: linear-gradient(#fff, #f4f2f0); }
.drop { width: 13px; height: 28px; border: 1px solid #b0acaa; border-radius: 3px; background: #f6f4f2; display: grid; place-items: center; }
.drop::after { content: ""; border: 4.5px solid transparent; border-top: 5px solid #333; border-bottom: 0; }
.drop.lit { background: #d8d4d1; margin-left: 2px; }
.colorrow { display: flex; height: 28px; margin-top: 6px; gap: 1px; }
.colorbtn { width: 256px; border: 1px solid #b0acaa; border-radius: 3px; background: #f8f6f4; padding: 5px 2px 5px 3px; }
.colorbtn i { height: 16px; border-radius: 3px; }
.black { background: #000; } .white { background: #fff; }
.colorrow svg { width: 25px; height: 18px; margin: 5px 0 0 8px; }
.folded { height: 33px; width: 467px; border-bottom: 2px solid #d2cecb; padding: 13px 0 0 3px; }
.folded::before { content: ""; display: block; width: 0; border: 5.5px solid transparent; border-left: 8px solid #333; border-right: 0; }
.vbar { width: 15px; border: 1px solid #c4c0bd; border-width: 0 1px; display: flex; flex-direction: column; }
.vbar .up, .vbar .down { height: 13px; background: #f8f6f4; display: grid; place-items: center; }
.vbar .up::after, .vbar .down::after { content: ""; border: 4px solid transparent; border-bottom-color: #444; border-top: 0; }
.vbar .down::after { border-top: 4px solid #444; border-bottom: 0; }
.vbar .track { height: 297px; background: #dfdbd8; border-top: 1px solid #b9b5b2; }
.vbar .grip { flex: 1; background: #f8f6f4; border: solid #b9b5b2; border-width: 1px 0; }

.status { height: 34px; display: flex; align-items: center; }
.coords { width: 328px; margin-left: 848px; white-space: pre; letter-spacing: .23px; }
.zoombox { width: 200px; height: 29px; border: 1px solid #b0acaa; border-radius: 3px; background: #fff; display: flex; justify-content: flex-end; }
.zoombox em::after { border-top-color: #444; }
.slider { width: 98px; height: 5px; margin-left: 7px; border: 1px solid #aaa6a3; border-radius: 3px; background: linear-gradient(90deg, #3a9bd9 8px, #d6d2cf 8px); display: flex; align-items: center; }
.slider i { flex: none; width: 13px; height: 13px; margin-left: 4px; border: 1px solid #999; border-radius: 3px; background: #fbfaf9; }
.resizegrip { margin: 16px 0 0 11px; }

.popup { position: absolute; left: 1027px; top: 481px; width: 223px; height: 603px; background: #fff; border: 1px solid #a29e9b; display: flex; flex-direction: column; }
.popup h4 { margin: 0; height: 23px; flex: none; background: #b8b4b1; color: #fff; font-weight: 400; font-size: 14.67px; line-height: 20px; padding: 1px 0 0 3px; white-space: nowrap; }
.popup h4:first-child { line-height: 28px; height: 25px; letter-spacing: .1px; }
.spin { height: 33px; margin: 0 1px 2px; display: flex; line-height: 32px; padding-left: 7px; letter-spacing: .6px; }
.spin span { flex: 1; }
.spin em { width: 17px; border-left: 1px solid #b9b5b2; display: flex; flex-direction: column; align-items: center; justify-content: center; gap: 8px; padding-right: 3px; }
.tu, .td { border: 4px solid transparent; border-bottom-color: #555; border-top: 0; }
.td { border-top: 4px solid #555; border-bottom: 0; }
.item { height: 29px; line-height: 29px; padding-left: 26px; flex: none; display: flex; letter-spacing: .6px; }
.item.off { color: #c3c0be; }
.item.more::after { content: ""; margin: 9px 5px 0 auto; height: 0; border: 4.5px solid transparent; border-left: 6px solid #444; border-right: 0; }
.popup hr { width: 214px; margin: 0 0 0 4px; border: 0; height: 1px; background: #b9b5b2; flex: none; }
.wheel { position: relative; width: 212px; height: 212px; margin: 5px 0 0 5px; flex: none; }
.wheel::before { content: ""; position: absolute; inset: 0; border-radius: 50%; background: conic-gradient(from 90deg, red, #f0f, #00f, #0ff, #0f0, #ff0, red); mask: radial-gradient(circle, transparent 91.5px, #000 92.5px); }
.tri { position: absolute; left: 61px; top: 28px; width: 136px; height: 156px; clip-path: polygon(0 0, 100% 50%, 0 100%); background: linear-gradient(30deg, #0ff, #000 135px), linear-gradient(150deg, #000, #f00 135px); background-blend-mode: screen; }
.huemark { position: absolute; right: 0; top: 105px; width: 14px; height: 2px; background: #fff; }
.pick { position: absolute; left: 55px; top: 22px; width: 9px; height: 9px; border: 2px solid #fff; border-radius: 50%; }
.alpha { width: 214px; height: 18px; margin: 8px 0 0 3px; flex: none; background: linear-gradient(90deg, transparent, #000), repeating-conic-gradient(#c8c8c8 0 25%, #fff 0 50%) 0 0 / 8px 8px; position: relative; border-radius: 2px; }
.alpha i { position: absolute; right: -5px; top: -1px; border: 5px solid transparent; border-top-color: #000; border-bottom: 0; }
.popup .recent { margin-top: 5px; }
.swatches { display: grid; grid-template-columns: repeat(10, 18px); gap: 4px; padding: 4px 0 0 3px; height: 26px; flex: none; align-content: start; }
.swatches.two { height: 47px; }
.swatches i { height: 18px; border: 1px solid #c1c1c1; }
.popup .low { margin-top: -1px; margin-bottom: 1px; }
.c-white { background: #fff; } .c-orange { background: #ff7f00; } .c-navy { background: #08306b; } .c-grey { background: #4d4d4d; } .c-green { background: #127844; } .c-wine { background: #75101f; } .c-sky { background: #62a8ff; } .c-silver { background: #b9b9b9; } .c-pale { background: #a6cee3; } .c-khaki { background: #b0a07c; } .c-steel { background: #3f74ae; } .c-red { background: #e31a1c; } .c-lav { background: #a5bfdd; } .c-peach { background: #fdbf6f; } .c-blue { background: #1f78b4; } .c-mint { background: #b2df8a; } .c-leaf { background: #33a02c; } .c-pink { background: #fb9a99; }
.swatches .c-black { background: #000; border-color: #444; }

.mark { position: absolute; border: 5px solid #f00; }
.m1 { left: 1007px; top: 451px; width: 123px; height: 39px; }
.m2 { left: 1029px; top: 505px; width: 221px; height: 36px; }
.m3 { left: 1445px; top: 489px; width: 32px; height: 46px; }
```
